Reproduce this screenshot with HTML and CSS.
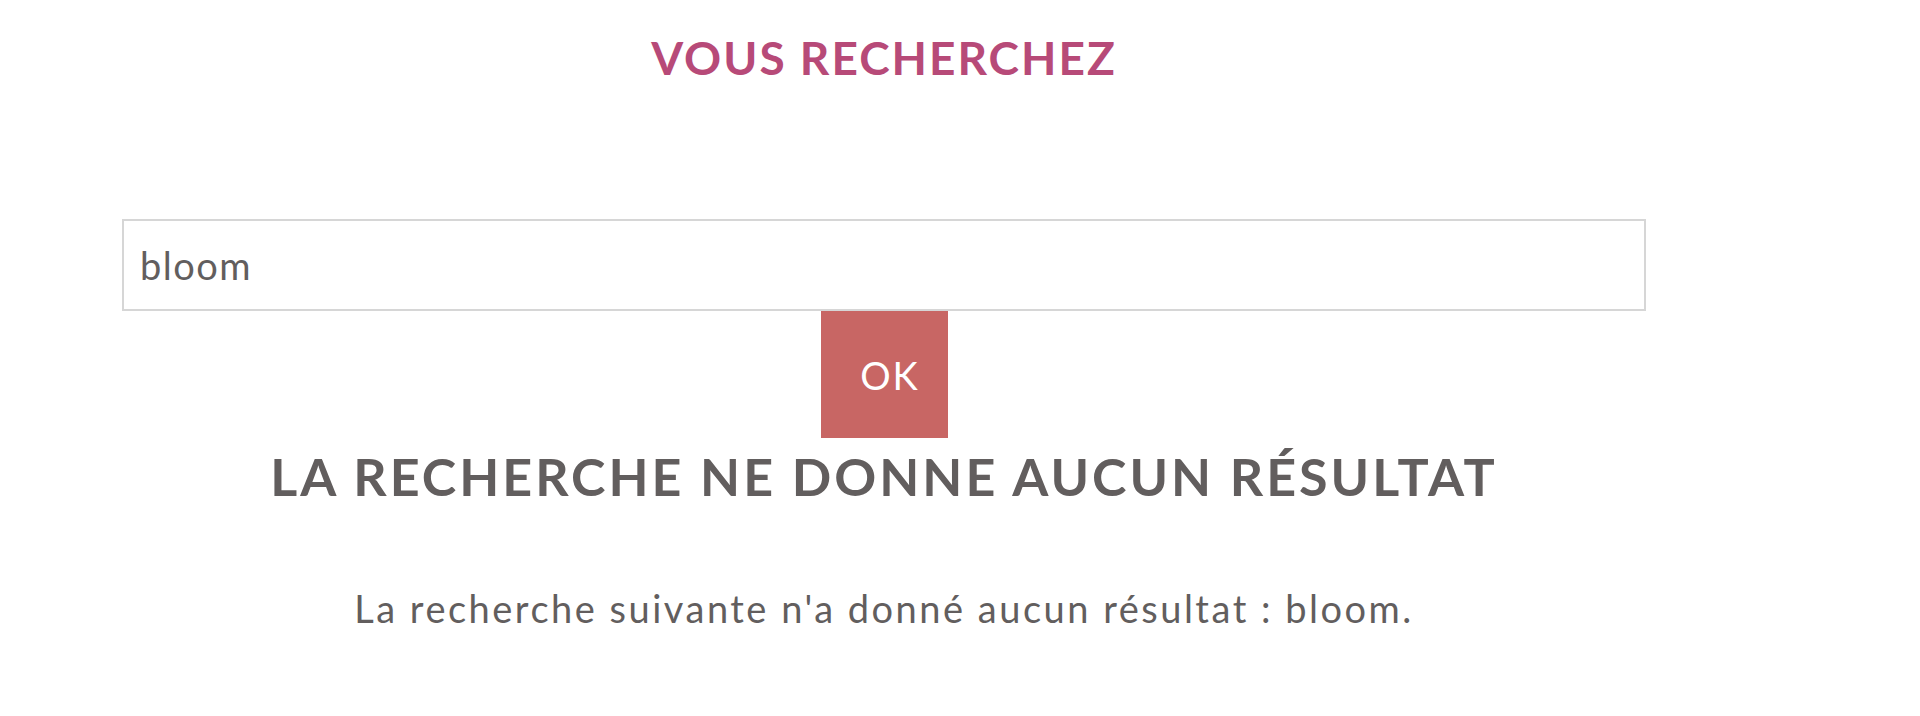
FILE: index.html
```html
<!DOCTYPE html>
<html lang="fr">
<head>
    <meta charset="UTF-8">
    <meta name="viewport" content="width=device-width, initial-scale=1.0">
    <title>Recherche</title>
    <link rel="stylesheet" href="styles.css">
</head>
<body>
    <div class="search-page">
        <h2 class="search-title">Vous recherchez</h2>

        <form class="search-form">
            <input type="text" class="search-input" value="bloom">
            <button type="submit" class="search-btn">OK</button>
        </form>

        <h1 class="no-result-title">La recherche ne donne aucun résultat</h1>
        <p class="no-result-text">La recherche suivante n'a donné aucun résultat : bloom.</p>
    </div>
</body>
</html>
```

FILE: styles.css
```css
body {
    font-family: 'Lato', 'Noto Sans', sans-serif;
    margin: 0;
    padding: 0;
    background-color: #fff;
    color: #625e5e;
}

.search-page {
    width: 1524px;
    margin-left: 122px;
    display: flex;
    flex-direction: column;
    align-items: center;
}

.search-title {
    margin: 30px 0 0;
    font-size: 46px;
    line-height: 1.2;
    font-weight: 700;
    letter-spacing: 2px;
    text-transform: uppercase;
    color: #b74a78;
}

.search-form {
    width: 100%;
    margin-top: 134px;
    display: flex;
    flex-direction: column;
    align-items: center;
}

.search-input {
    box-sizing: border-box;
    width: 100%;
    height: 92px;
    padding: 0 16px;
    border: 2px solid #d6d6d6;
    font-family: inherit;
    font-size: 38px;
    letter-spacing: 1.5px;
    color: #625e5e;
    outline: none;
}

.search-btn {
    width: 127px;
    height: 127px;
    padding: 0 0 0 12px;
    border: none;
    background-color: #c86664;
    color: #fff;
    font-family: inherit;
    font-size: 38px;
    letter-spacing: 2px;
    cursor: pointer;
}

.no-result-title {
    margin: 7px 0 0;
    font-size: 52px;
    line-height: 1.2;
    font-weight: 700;
    letter-spacing: 3px;
    text-transform: uppercase;
}

.no-result-text {
    margin: 78px 0 0;
    font-size: 38px;
    line-height: 1.2;
    letter-spacing: 2.5px;
}
```
